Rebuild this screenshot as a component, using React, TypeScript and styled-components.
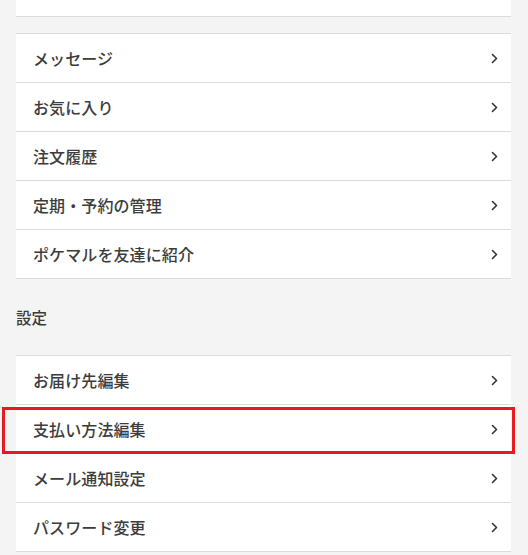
import React from "react";
import styled, { createGlobalStyle } from "styled-components";

const Global = createGlobalStyle`
  html, body {
    margin: 0;
    padding: 0;
    background: #f4f4f4;
    font-family: "Noto Sans CJK JP", "Noto Sans", sans-serif;
    color: #333;
  }
  * { box-sizing: border-box; }
`;

const Page = styled.div`
  display: flex;
  flex-direction: column;
  padding: 0 17px 0 16px;
  min-height: 555px;
  background: #f4f4f4;
`;

const Card = styled.div`
  background: #fff;
  border-top: 1px solid #dcdcdc;
  display: flex;
  flex-direction: column;
`;

const Stub = styled.div`
  height: 17px;
  background: #fff;
  border-bottom: 1px solid #dcdcdc;
  margin-bottom: 16px;
`;

const Row = styled.div`
  position: relative;
  height: 49px;
  border-bottom: 1px solid #dcdcdc;
  display: flex;
  align-items: center;
  justify-content: space-between;
  padding: 0 13px 0 17px;
  font-size: 16px;
  font-weight: 500;
  color: #3c3c3c;
  letter-spacing: 0.1px;
`;

const Label = styled.span`
  line-height: 1;
  margin-top: -1px;
`;

const SectionTitle = styled.div`
  height: 76px;
  display: flex;
  align-items: center;
  font-size: 15.5px;
  font-weight: 500;
  color: #3c3c3c;
`;

const Highlight = styled.div`
  position: absolute;
  left: -14px;
  right: -4px;
  top: 2px;
  bottom: -1px;
  border: 3px solid #e81a1f;
  pointer-events: none;
`;

const Chevron = () => (
  <svg width="7" height="11" viewBox="0 0 7 11" fill="none">
    <polyline
      points="1.5,1.5 5.5,5.5 1.5,9.5"
      stroke="#333"
      strokeWidth="1.6"
      strokeLinecap="round"
      strokeLinejoin="round"
    />
  </svg>
);

const Item = ({ label, highlight }: { label: string; highlight?: boolean }) => (
  <Row>
    <Label>{label}</Label>
    <Chevron />
    {highlight && <Highlight />}
  </Row>
);

const menu = ["メッセージ", "お気に入り", "注文履歴", "定期・予約の管理", "ポケマルを友達に紹介"];
const settings = ["お届け先編集", "支払い方法編集", "メール通知設定", "パスワード変更"];

export default function App() {
  return (
    <>
      <Global />
      <Page>
        <Stub />
        <Card>
          {menu.map((m) => (
            <Item key={m} label={m} />
          ))}
        </Card>
        <SectionTitle>設定</SectionTitle>
        <Card>
          {settings.map((m) => (
            <Item key={m} label={m} highlight={m === "支払い方法編集"} />
          ))}
        </Card>
      </Page>
    </>
  );
}
